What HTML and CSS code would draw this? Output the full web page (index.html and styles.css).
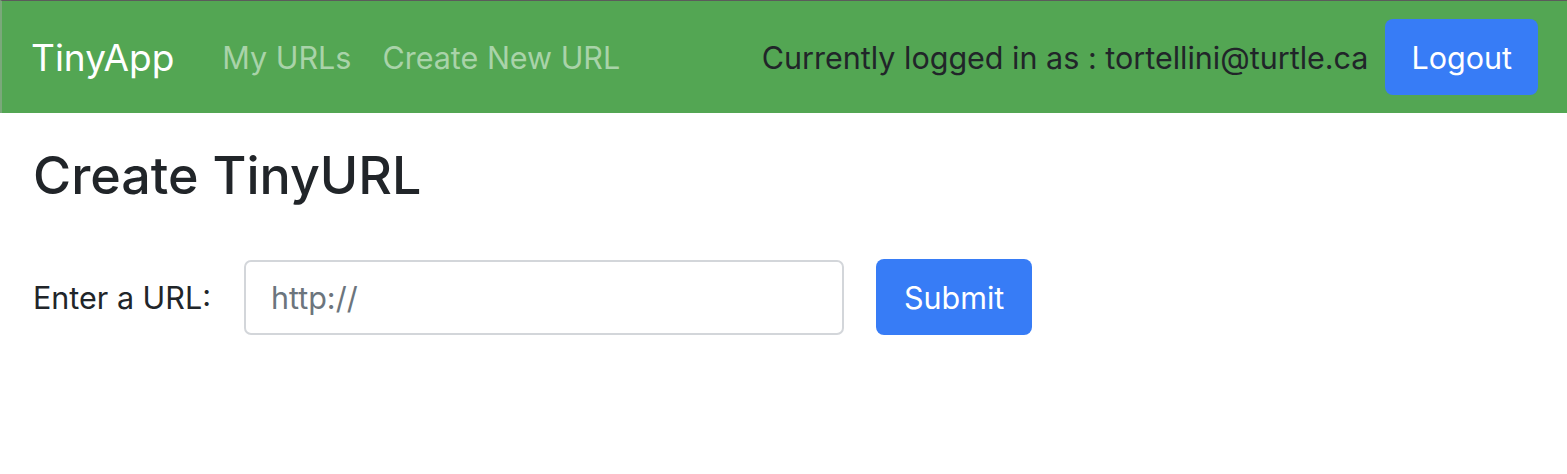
FILE: index.html
```html
<!DOCTYPE html>
<html lang="en">
<head>
<meta charset="utf-8">
<title>TinyApp</title>
<link rel="stylesheet" href="styles.css">
</head>
<body>
<nav class="navbar">
  <a class="brand" href="#">TinyApp</a>
  <div class="nav-links">
    <a class="nav-link" href="#">My URLs</a>
    <a class="nav-link" href="#">Create New URL</a>
  </div>
  <div class="nav-user">
    <span class="user-text">Currently logged in as : tortellini@turtle.ca</span>
    <button class="btn" type="button">Logout</button>
  </div>
</nav>
<main class="main">
  <h1 class="title">Create TinyURL</h1>
  <form class="url-form">
    <label class="label" for="longURL">Enter a URL:</label>
    <input class="input" id="longURL" type="text" placeholder="http://">
    <button class="btn btn-submit" type="submit">Submit</button>
  </form>
</main>
</body>
</html>
```
FILE: styles.css
```css
* { box-sizing: border-box; }
html, body { margin: 0; padding: 0; background: #fff; }
body {
  font-family: Inter, "Noto Sans", "Liberation Sans", sans-serif;
  color: #212529;
  font-size: 30.5px;
}
.navbar {
  height: 113px;
  background: #53a653;
  border-top: 1px solid #5b5b5b;
  border-left: 2px solid #7aa87a;
  display: flex;
  align-items: center;
  padding: 0 29px 0 29px;
}
.brand {
  color: #fff;
  text-decoration: none;
  font-size: 37px;
  margin-right: 48px;
}
.nav-links { display: flex; gap: 31px; }
.nav-link { color: #a9d3a9; text-decoration: none; }
.nav-user { margin-left: auto; display: flex; align-items: center; gap: 17px; }
.user-text { color: #212529; }
.btn {
  font: inherit;
  color: #fff;
  background: #377cf6;
  border: 0;
  border-radius: 8px;
  height: 76px;
  padding: 0 26px;
  cursor: pointer;
}
.btn-submit { padding: 0 28px; }
.main { padding: 0 33px; }
.title {
  font-size: 52px;
  font-weight: 500;
  margin: 32px 0 52px;
  line-height: 1.2;
}
.url-form { display: flex; align-items: center; }
.label { margin-right: 33px; }
.input {
  font: inherit;
  width: 600px;
  height: 75px;
  border: 2px solid #d3d6da;
  border-radius: 7px;
  padding: 0 25px;
  margin-right: 32px;
  color: #212529;
}
.input::placeholder { color: #6c757d; }
```
